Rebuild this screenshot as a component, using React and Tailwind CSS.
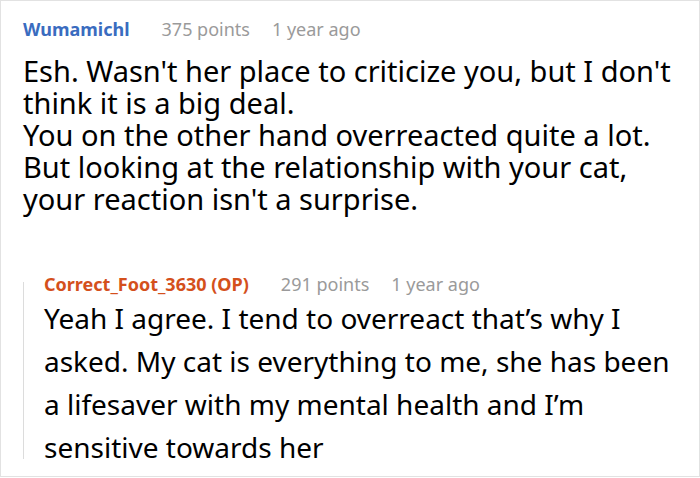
import React from "react";

function CommentHeader({ name, nameClass, points, time }) {
  return (
    <div className="flex items-baseline text-[18px] leading-[24px]">
      <span className={`font-bold ${nameClass}`}>{name}</span>
      <span className="ml-[32px] text-[#9a9a9a]">{points}</span>
      <span className="ml-[22px] text-[#9a9a9a]">{time}</span>
    </div>
  );
}

export default function App() {
  return (
    <div className="w-[700px] h-[477px] bg-white border border-[#e2e2e2] overflow-hidden pl-[22px] pt-[16px] text-black font-['Noto_Sans','Open_Sans',sans-serif]">
      <CommentHeader
        name="Wumamichl"
        nameClass="text-[#3a6cbf]"
        points="375 points"
        time="1 year ago"
      />
      <div className="mt-[14px] w-[650px] text-[29px] leading-[32px]">
        Esh. Wasn't her place to criticize you, but I don't think it is a big deal.
        <br />
        You on the other hand overreacted quite a lot.
        <br />
        But looking at the relationship with your cat, your reaction isn't a surprise.
      </div>

      <div className="mt-[57px] flex">
        <div className="mt-[10px] mb-[10px] w-px bg-[#dcdcdc]" />
        <div className="ml-[20px] w-[650px]">
          <CommentHeader
            name="Correct_Foot_3630 (OP)"
            nameClass="text-[#d4501c]"
            points="291 points"
            time="1 year ago"
          />
          <div className="mt-px text-[28px] leading-[43px]">
            Yeah I agree. I tend to overreact that’s why I
            <br />
            asked. My cat is everything to me, she has been
            <br />
            a lifesaver with my mental health and I’m
            <br />
            sensitive towards her
          </div>
        </div>
      </div>
    </div>
  );
}
